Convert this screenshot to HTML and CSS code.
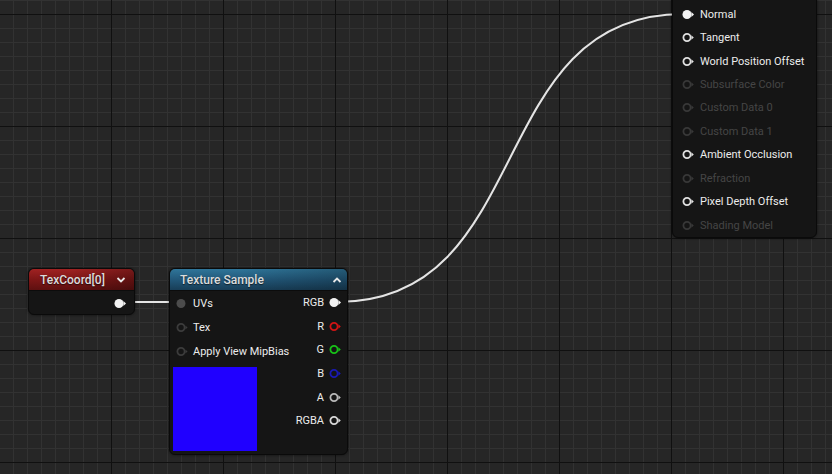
FILE: index.html
```html
<!DOCTYPE html>
<html>
<head>
<meta charset="utf-8">
<link rel="stylesheet" href="styles.css">
</head>
<body>
<div class="canvas">
  <svg class="wires" width="832" height="474" viewBox="0 0 832 474">
    <path d="M124 302 L177 302" class="wire"/>
    <path d="M337 302 C537 302 483 14 683 14" class="wire"/>
  </svg>

  <div class="node texcoord">
    <div class="header red">
      <span class="title">TexCoord[0]</span>
      <svg class="chev" width="10" height="8" viewBox="0 0 10 8"><path d="M1.5 2 L5 5.5 L8.5 2" fill="none" stroke="#e8e8e8" stroke-width="1.8"/></svg>
    </div>
    <div class="tc-body">
      <svg class="pin" width="13" height="11" viewBox="0 0 13 11"><circle cx="5" cy="5.5" r="4.5" fill="#f2f2f2"/><polygon points="9.4,3 12,5.5 9.4,8" fill="#f2f2f2"/></svg>
    </div>
  </div>

  <div class="node texsample">
    <div class="header blue">
      <span class="title">Texture Sample</span>
      <svg class="chev" width="10" height="8" viewBox="0 0 10 8"><path d="M1.5 6 L5 2.5 L8.5 6" fill="none" stroke="#e8e8e8" stroke-width="1.8"/></svg>
    </div>
    <div class="ts-body">
      <div class="inputs">
        <div class="row in">
          <svg class="pin" width="13" height="11" viewBox="0 0 13 11"><circle cx="5" cy="5.5" r="4.5" fill="#4c4c4c"/></svg>
          <span>UVs</span>
        </div>
        <div class="row in">
          <svg class="pin" width="13" height="11" viewBox="0 0 13 11"><circle cx="5" cy="5.5" r="3.6" fill="none" stroke="#3c3c3c" stroke-width="1.8"/><polygon points="9.4,3.4 11.6,5.5 9.4,7.6" fill="#3c3c3c"/></svg>
          <span>Tex</span>
        </div>
        <div class="row in">
          <svg class="pin" width="13" height="11" viewBox="0 0 13 11"><circle cx="5" cy="5.5" r="3.6" fill="none" stroke="#3c3c3c" stroke-width="1.8"/><polygon points="9.4,3.4 11.6,5.5 9.4,7.6" fill="#3c3c3c"/></svg>
          <span>Apply View MipBias</span>
        </div>
        <div class="preview"></div>
      </div>
      <div class="outputs">
        <div class="row out">
          <span>RGB</span>
          <svg class="pin" width="13" height="11" viewBox="0 0 13 11"><circle cx="5" cy="5.5" r="4.5" fill="#f2f2f2"/><polygon points="9.4,3 12,5.5 9.4,8" fill="#f2f2f2"/></svg>
        </div>
        <div class="row out">
          <span>R</span>
          <svg class="pin" width="13" height="11" viewBox="0 0 13 11"><circle cx="5" cy="5.5" r="3.6" fill="none" stroke="#d11414" stroke-width="1.8"/><polygon points="9.4,3.2 11.8,5.5 9.4,7.8" fill="#d11414"/></svg>
        </div>
        <div class="row out">
          <span>G</span>
          <svg class="pin" width="13" height="11" viewBox="0 0 13 11"><circle cx="5" cy="5.5" r="3.6" fill="none" stroke="#18c218" stroke-width="1.8"/><polygon points="9.4,3.2 11.8,5.5 9.4,7.8" fill="#18c218"/></svg>
        </div>
        <div class="row out">
          <span>B</span>
          <svg class="pin" width="13" height="11" viewBox="0 0 13 11"><circle cx="5" cy="5.5" r="3.6" fill="none" stroke="#1a1ab4" stroke-width="1.8"/><polygon points="9.4,3.2 11.8,5.5 9.4,7.8" fill="#1a1ab4"/></svg>
        </div>
        <div class="row out">
          <span>A</span>
          <svg class="pin" width="13" height="11" viewBox="0 0 13 11"><circle cx="5" cy="5.5" r="3.6" fill="none" stroke="#b8b8b8" stroke-width="1.8"/><polygon points="9.4,3.2 11.8,5.5 9.4,7.8" fill="#b8b8b8"/></svg>
        </div>
        <div class="row out">
          <span>RGBA</span>
          <svg class="pin" width="13" height="11" viewBox="0 0 13 11"><circle cx="5" cy="5.5" r="3.6" fill="none" stroke="#d8d8d8" stroke-width="1.8"/><polygon points="9.4,3.2 11.8,5.5 9.4,7.8" fill="#d8d8d8"/></svg>
        </div>
      </div>
    </div>
  </div>

  <div class="node result">
    <div class="row res">
      <svg class="pin" width="13" height="11" viewBox="0 0 13 11"><circle cx="5" cy="5.5" r="4.5" fill="#f2f2f2"/><polygon points="9.4,3 12,5.5 9.4,8" fill="#f2f2f2"/></svg>
      <span>Normal</span>
    </div>
    <div class="row res">
      <svg class="pin" width="13" height="11" viewBox="0 0 13 11"><circle cx="5" cy="5.5" r="3.6" fill="none" stroke="#e0e0e0" stroke-width="1.8"/><polygon points="9.4,3.2 11.8,5.5 9.4,7.8" fill="#e0e0e0"/></svg>
      <span>Tangent</span>
    </div>
    <div class="row res">
      <svg class="pin" width="13" height="11" viewBox="0 0 13 11"><circle cx="5" cy="5.5" r="3.6" fill="none" stroke="#e0e0e0" stroke-width="1.8"/><polygon points="9.4,3.2 11.8,5.5 9.4,7.8" fill="#e0e0e0"/></svg>
      <span>World Position Offset</span>
    </div>
    <div class="row res off">
      <svg class="pin" width="13" height="11" viewBox="0 0 13 11"><circle cx="5" cy="5.5" r="3.6" fill="none" stroke="#383838" stroke-width="1.8"/><polygon points="9.4,3.2 11.8,5.5 9.4,7.8" fill="#383838"/></svg>
      <span>Subsurface Color</span>
    </div>
    <div class="row res off">
      <svg class="pin" width="13" height="11" viewBox="0 0 13 11"><circle cx="5" cy="5.5" r="3.6" fill="none" stroke="#383838" stroke-width="1.8"/><polygon points="9.4,3.2 11.8,5.5 9.4,7.8" fill="#383838"/></svg>
      <span>Custom Data 0</span>
    </div>
    <div class="row res off">
      <svg class="pin" width="13" height="11" viewBox="0 0 13 11"><circle cx="5" cy="5.5" r="3.6" fill="none" stroke="#383838" stroke-width="1.8"/><polygon points="9.4,3.2 11.8,5.5 9.4,7.8" fill="#383838"/></svg>
      <span>Custom Data 1</span>
    </div>
    <div class="row res">
      <svg class="pin" width="13" height="11" viewBox="0 0 13 11"><circle cx="5" cy="5.5" r="3.6" fill="none" stroke="#e0e0e0" stroke-width="1.8"/><polygon points="9.4,3.2 11.8,5.5 9.4,7.8" fill="#e0e0e0"/></svg>
      <span>Ambient Occlusion</span>
    </div>
    <div class="row res off">
      <svg class="pin" width="13" height="11" viewBox="0 0 13 11"><circle cx="5" cy="5.5" r="3.6" fill="none" stroke="#383838" stroke-width="1.8"/><polygon points="9.4,3.2 11.8,5.5 9.4,7.8" fill="#383838"/></svg>
      <span>Refraction</span>
    </div>
    <div class="row res">
      <svg class="pin" width="13" height="11" viewBox="0 0 13 11"><circle cx="5" cy="5.5" r="3.6" fill="none" stroke="#e0e0e0" stroke-width="1.8"/><polygon points="9.4,3.2 11.8,5.5 9.4,7.8" fill="#e0e0e0"/></svg>
      <span>Pixel Depth Offset</span>
    </div>
    <div class="row res off">
      <svg class="pin" width="13" height="11" viewBox="0 0 13 11"><circle cx="5" cy="5.5" r="3.6" fill="none" stroke="#383838" stroke-width="1.8"/><polygon points="9.4,3.2 11.8,5.5 9.4,7.8" fill="#383838"/></svg>
      <span>Shading Model</span>
    </div>
  </div>
</div>
</body>
</html>
```

FILE: styles.css
```css
html, body {
  margin: 0;
  padding: 0;
  background: #262626;
}

.canvas {
  position: relative;
  width: 832px;
  height: 474px;
  overflow: hidden;
  font-family: Roboto, "Liberation Sans", sans-serif;
  background-color: #262626;
  background-image:
    linear-gradient(to right, #101010 1px, transparent 1px),
    linear-gradient(to bottom, #101010 1px, transparent 1px),
    linear-gradient(to right, #323232 1px, transparent 1px),
    linear-gradient(to bottom, #323232 1px, transparent 1px);
  background-size: 112px 112px, 112px 112px, 14px 14px, 14px 14px;
  background-position: 111px 0, 0 14px, 13px 0, 0 0;
}

.wires {
  position: absolute;
  left: 0;
  top: 0;
}

.wire {
  fill: none;
  stroke: #e4e4e4;
  stroke-width: 2;
}

.node {
  position: absolute;
  box-sizing: border-box;
  background: #151515;
  border: 1px solid #0a0a0a;
  border-radius: 6px;
  box-shadow: 0 0 3px rgba(0, 0, 0, 0.6);
  color: #ececec;
  font-size: 11px;
}

.header {
  display: flex;
  align-items: center;
  justify-content: space-between;
  height: 21px;
  border-radius: 5px 5px 0 0;
  border-bottom: 1px solid #0c0c0c;
  font-size: 12px;
  font-weight: 500;
  color: #dcdcdc;
  text-shadow: 0 1px 1px rgba(0, 0, 0, 0.6);
}

.header.red {
  padding: 0 8px 0 11px;
  background: linear-gradient(to right, rgba(0,0,0,0) 40%, rgba(0,0,0,0.25)),
              linear-gradient(to bottom, #a02222 0%, #7e1616 50%, #5e1010 100%);
}

.header.blue {
  padding: 0 5px 0 10px;
  background: linear-gradient(to right, rgba(0,0,0,0) 40%, rgba(0,0,0,0.22)),
              linear-gradient(to bottom, #2f7599 0%, #22587a 50%, #183e57 100%);
}

.chev {
  display: block;
}

.pin {
  display: block;
  flex: none;
}

/* TexCoord */
.texcoord {
  left: 28px;
  top: 268px;
  width: 107px;
  height: 47px;
}

.tc-body {
  display: flex;
  justify-content: flex-end;
  align-items: center;
  height: 24px;
  padding-right: 7px;
}

/* Texture Sample */
.texsample {
  left: 169px;
  top: 268px;
  width: 179px;
  height: 187px;
}

.ts-body {
  display: flex;
  justify-content: space-between;
}

.inputs {
  display: flex;
  flex-direction: column;
  padding-left: 3px;
}

.outputs {
  display: flex;
  flex-direction: column;
  align-items: flex-end;
  padding-right: 5px;
}

.row {
  display: flex;
  align-items: center;
  white-space: nowrap;
}

.row.in {
  height: 24px;
  gap: 4px;
  padding-left: 3px;
}

.row.out {
  height: 23.6px;
  gap: 5px;
}

.preview {
  width: 84px;
  height: 84px;
  margin-top: 4px;
  background: #2000ff;
}

/* Result node */
.result {
  left: 672px;
  top: -20px;
  width: 145px;
  height: 258px;
  padding: 21.5px 0 0 9px;
}

.row.res {
  height: 23.44px;
  gap: 5px;
}

.row.res.off {
  color: #454545;
}
```
